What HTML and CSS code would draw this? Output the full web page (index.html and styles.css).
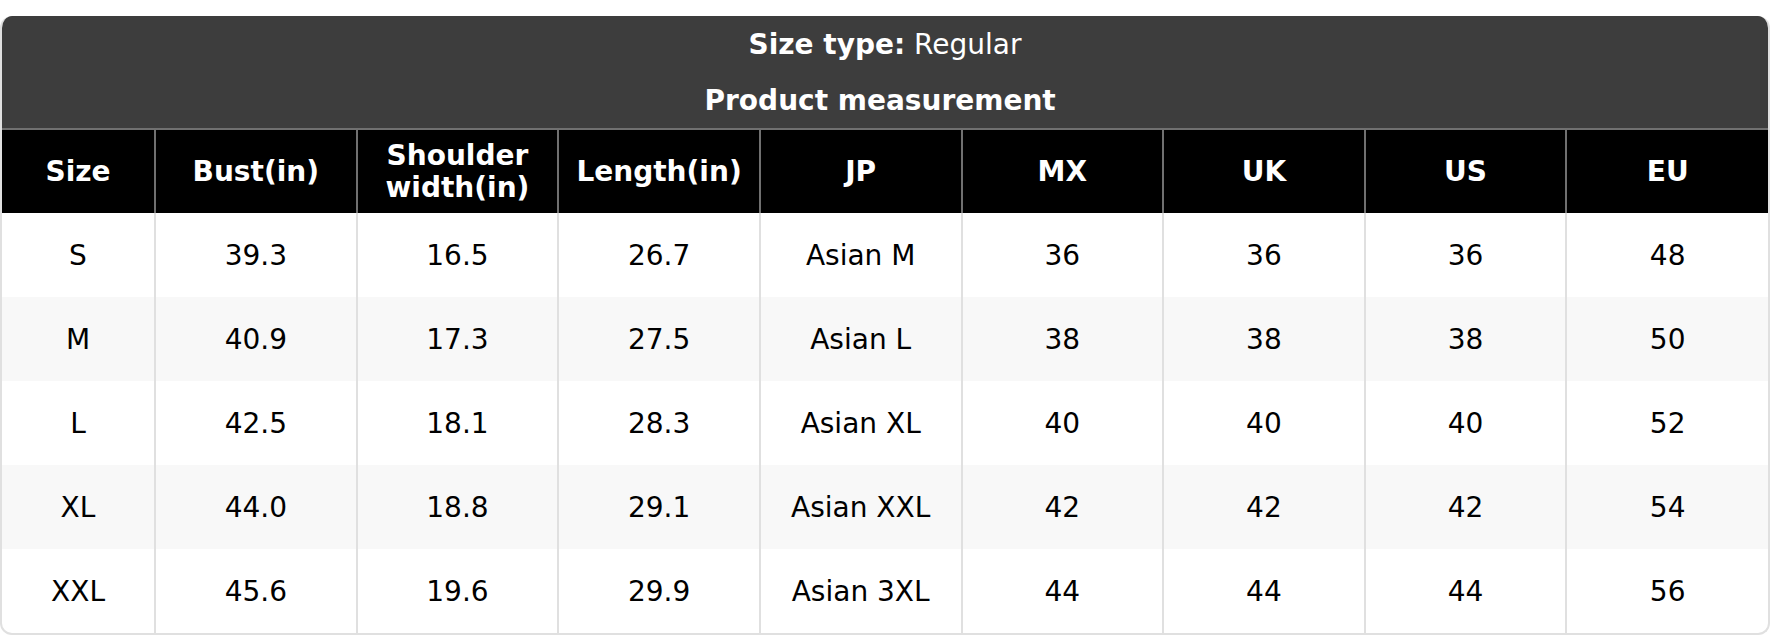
FILE: index.html
```html
<!DOCTYPE html>
<html>
<head>
<meta charset="utf-8">
<link rel="stylesheet" href="styles.css">
</head>
<body>
<div class="chart">
  <div class="title">
    <div class="title-line"><b>Size type:</b> Regular</div>
    <div class="title-line"><b>Product measurement </b></div>
  </div>
  <table class="grid">
    <colgroup>
      <col class="c-first">
      <col><col><col><col><col><col><col><col>
    </colgroup>
    <thead>
      <tr>
        <th>Size</th><th>Bust(in)</th><th>Shoulder<br>width(in)</th><th>Length(in)</th><th>JP</th><th>MX</th><th>UK</th><th>US</th><th>EU</th>
      </tr>
    </thead>
    <tbody>
      <tr><td>S</td><td>39.3</td><td>16.5</td><td>26.7</td><td>Asian M</td><td>36</td><td>36</td><td>36</td><td>48</td></tr>
      <tr><td>M</td><td>40.9</td><td>17.3</td><td>27.5</td><td>Asian L</td><td>38</td><td>38</td><td>38</td><td>50</td></tr>
      <tr><td>L</td><td>42.5</td><td>18.1</td><td>28.3</td><td>Asian XL</td><td>40</td><td>40</td><td>40</td><td>52</td></tr>
      <tr><td>XL</td><td>44.0</td><td>18.8</td><td>29.1</td><td>Asian XXL</td><td>42</td><td>42</td><td>42</td><td>54</td></tr>
      <tr><td>XXL</td><td>45.6</td><td>19.6</td><td>29.9</td><td>Asian 3XL</td><td>44</td><td>44</td><td>44</td><td>56</td></tr>
    </tbody>
  </table>
</div>
</body>
</html>
```

FILE: styles.css
```css
html, body {
  margin: 0;
  padding: 0;
  background: #ffffff;
}
body {
  padding-top: 16px;
  font-family: "DejaVu Sans", sans-serif;
  color: #000;
}
.chart {
  width: 1770px;
  box-sizing: border-box;
  border: 2px solid #e0e0e0;
  border-top: none;
  border-radius: 12px;
  overflow: hidden;
}
.title {
  background: #3d3d3d;
  color: #ffffff;
  font-size: 28px;
  text-align: center;
  margin: 0 -2px;
}
.title-line {
  height: 56px;
  display: flex;
  align-items: center;
  justify-content: center;
  white-space: pre;
}
.title-line b {
  font-weight: bold;
}
.grid {
  width: 100%;
  border-collapse: collapse;
  table-layout: fixed;
  font-size: 28px;
}
.c-first {
  width: 153px;
}
.grid th {
  background: #000;
  color: #fff;
  font-weight: bold;
  height: 83px;
  padding: 0;
  line-height: 32px;
  border-top: 2px solid #707070;
  border-left: 2px solid #707070;
  text-align: center;
}
.grid th:first-child,
.grid td:first-child {
  border-left: none;
}
.grid td {
  height: 84px;
  padding: 0;
  text-align: center;
  border-left: 2px solid #e0e0e0;
}
.grid tbody tr:nth-child(even) td {
  background: #f8f8f8;
}
```
